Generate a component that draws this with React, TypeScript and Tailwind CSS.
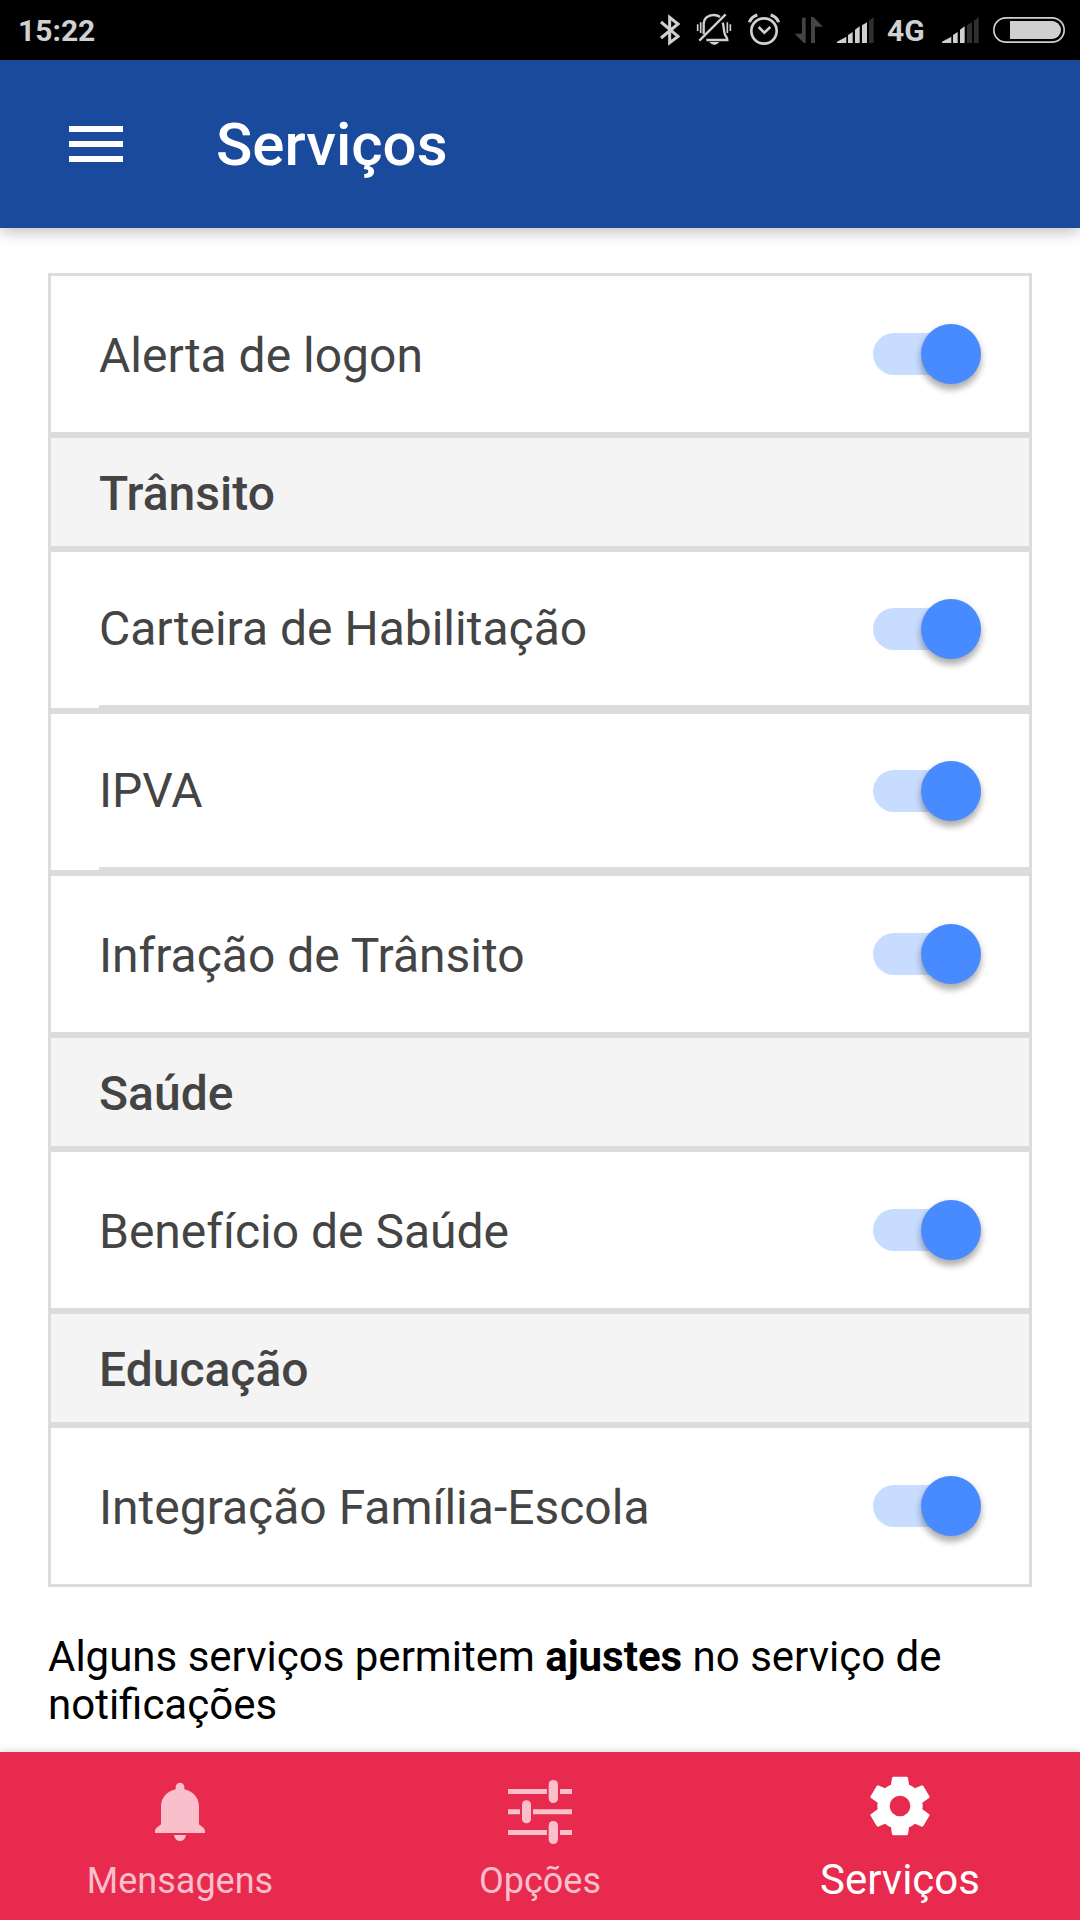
import React, { useState } from 'react';
import clsx from 'clsx';

type Service = { id: string; label: string };
type Group = { title?: string; services: Service[] };

const groups: Group[] = [
  { services: [{ id: 'logon', label: 'Alerta de logon' }] },
  {
    title: 'Trânsito',
    services: [
      { id: 'cnh', label: 'Carteira de Habilitação' },
      { id: 'ipva', label: 'IPVA' },
      { id: 'infracao', label: 'Infração de Trânsito' },
    ],
  },
  { title: 'Saúde', services: [{ id: 'saude', label: 'Benefício de Saúde' }] },
  { title: 'Educação', services: [{ id: 'escola', label: 'Integração Família-Escola' }] },
];

const BluetoothIcon = () => (
  <svg viewBox="51 0 75 180" className="w-[25px] h-[60px]" fill="none" stroke="currentColor" strokeWidth="9">
    <path d="M63 66 L114 109 L89 128 V52 L114 72 L63 114" />
  </svg>
);

const SilentIcon = () => (
  <svg viewBox="162 0 120 180" className="w-10 h-[60px]" fill="none" stroke="currentColor" strokeWidth="7">
    <path d="M191 103 V73 C191 55 204 45 221 45 C229 45 235 47 240 51" />
    <path d="M248 68 C252 78 251 92 254 101 C256 109 262 112 262 120 H199" />
    <path d="M257 43 L178 122" />
    <path d="M173 73 V93 M182 67 V99 M262 67 V99 M271 73 V93" strokeWidth="5" />
    <path d="M208 126 H238 Q223 144 208 126 Z" fill="currentColor" stroke="none" />
  </svg>
);

const AlarmIcon = () => (
  <svg viewBox="318 0 108 180" className="w-9 h-[60px]" fill="none" stroke="currentColor" strokeWidth="8">
    <circle cx="372" cy="93" r="38" />
    <path d="M356 81 L373 98 L391 81" strokeWidth="8" />
    <path d="M328 67 C332 56 341 48 352 45 M416 67 C412 56 403 48 392 45" strokeWidth="9" />
  </svg>
);

const DataIcon = () => (
  <svg viewBox="462 0 90 180" className="w-[30px] h-[60px]" fill="#444444">
    <path d="M497 53 V129 H492 L464 101 H486 V53 Z M513 129 V51 H520 L549 80 H525 V129 Z" />
  </svg>
);

const SignalIcon = ({ level, wide = false }: { level: number; wide?: boolean }) => {
  const bars = [
    'M0 129 V125 L28 110 V129 Z',
    'M33 129 V105 L47 96 V129 Z',
    'M54 129 V89 L68 79 V129 Z',
    'M75 129 V76 L90 67 V129 Z',
    'M96 129 V62 L110 52 V129 Z',
  ];
  return (
    <svg
      viewBox={wide ? '-21 0 138 180' : '-3 0 117 180'}
      className={clsx('h-[60px]', wide ? 'w-[46px]' : 'w-[39px]')}
    >
      {bars.map((d, i) => (
        <path key={d} d={d} fill={i < level ? '#d0d0d0' : '#303030'} />
      ))}
    </svg>
  );
};

const BatteryIcon = () => (
  <svg viewBox="1059 0 216 180" className="w-[72px] h-[60px]">
    <rect x="1061.5" y="53.5" width="211" height="73" rx="36.5" fill="none" stroke="currentColor" strokeWidth="5" />
    <path d="M1110 63 H1236 A27 27 0 0 1 1236 117 H1110 Z" fill="currentColor" />
  </svg>
);

const BellIcon = () => (
  <svg viewBox="264 108 192 210" className="w-16 h-[70px]" fill="currentColor">
    <path d="M347 148 V141 A13 13 0 0 1 373 141 V148 C399 154 417 173 417 200 V253 C423 259 435 264 435 274 V279 H285 V274 C285 264 297 259 303 253 V200 C303 173 321 154 347 148 Z" />
    <path d="M342 285 H378 C376 297 369 303 360 303 C351 303 344 297 342 285 Z" />
  </svg>
);

const OptionsIcon = () => (
  <svg viewBox="204 108 192 210" className="w-16 h-[70px]" fill="currentColor">
    <path d="M204 147 H321 V162 H204 Z M360 147 H396 V162 H360 Z" />
    <path d="M204 208 H240 V223 H204 Z M279 208 H396 V223 H279 Z" />
    <path d="M204 270 H321 V285 H204 Z M360 270 H396 V285 H360 Z" />
    <rect x="326" y="120" width="28" height="69" rx="14" />
    <rect x="246" y="181" width="27" height="69" rx="13" />
    <rect x="326" y="243" width="28" height="69" rx="14" />
  </svg>
);

const GearIcon = () => (
  <svg viewBox="264 108 192 210" className="w-16 h-[70px]" fill="currentColor" fillRule="evenodd">
    <path d="M339 110 H381 L384 113 L387 134 Q397 138 405 145 L426 136 L430 138 L449 170 L448 173 L427 188 Q429 198 427 208 L448 223 L449 226 L430 258 L426 260 L405 251 Q397 258 387 262 L384 283 L381 286 H339 L336 283 L333 262 Q323 258 315 251 L294 260 L290 258 L271 226 L272 223 L293 208 Q291 198 293 188 L272 173 L271 170 L290 138 L294 136 L315 145 Q323 138 333 134 L336 113 Z M360 167 A31 31 0 1 0 360 229 A31 31 0 1 0 360 167 Z" />
  </svg>
);

const tabs = [
  { id: 'mensagens', label: 'Mensagens', Icon: BellIcon },
  { id: 'opcoes', label: 'Opções', Icon: OptionsIcon },
  { id: 'servicos', label: 'Serviços', Icon: GearIcon },
];

const StatusBar = () => (
  <div className="flex h-[60px] items-center justify-between bg-black pl-[18px] pr-[15px] text-[30px] leading-[60px] font-bold text-[#d0d0d0]">
    <span className="pt-0.5">15:22</span>
    <div className="flex items-center gap-3">
      <BluetoothIcon />
      <SilentIcon />
      <AlarmIcon />
      <DataIcon />
      <SignalIcon level={4} />
      <span className="w-9 pt-0.5">4G</span>
      <SignalIcon level={3} wide />
      <BatteryIcon />
    </div>
  </div>
);

const Toggle = ({ id, checked, onChange }: { id: string; checked: boolean; onChange: () => void }) => (
  <input
    id={id}
    type="checkbox"
    role="switch"
    checked={checked}
    onChange={onChange}
    className="flex h-[42px] w-[108px] shrink-0 cursor-pointer appearance-none items-center rounded-full bg-[#dedede] before:h-[60px] before:w-[60px] before:shrink-0 before:rounded-full before:bg-white before:shadow-[0_6px_6px_rgba(0,0,0,0.22),0_3px_9px_rgba(0,0,0,0.16)] before:content-[''] checked:justify-end checked:bg-[#c8dcff] checked:before:bg-[#488aff]"
  />
);

const App: React.FC = () => {
  const [enabled, setEnabled] = useState<Record<string, boolean>>({
    logon: true,
    cnh: true,
    ipva: true,
    infracao: true,
    saude: true,
    escola: true,
  });
  const [activeTab, setActiveTab] = useState('servicos');

  const toggle = (id: string) => setEnabled((prev) => ({ ...prev, [id]: !prev[id] }));

  return (
    <div className="flex min-h-screen flex-col bg-white font-['Roboto',sans-serif]">
      <StatusBar />
      <header className="flex h-[168px] items-center bg-[#1a4a9c] pl-[69px] text-white shadow-[0_3px_15px_rgba(0,0,0,0.28)]">
        <button type="button" aria-label="Menu" className="flex w-[54px] flex-col gap-[9px]">
          <span className="h-1.5 bg-white" />
          <span className="h-1.5 bg-white" />
          <span className="h-1.5 bg-white" />
        </button>
        <h1 className="ml-[93px] pt-0.5 text-[60px] leading-[72px] font-medium">Serviços</h1>
      </header>

      <main className="flex-1 px-12 pt-[45px] pb-5">
        <div className="flex flex-col gap-1.5 border-3 border-[#dcdcdc] bg-[#dcdcdc] text-[48px] leading-[60px] text-[#444444]">
          {groups.map((group, g) => (
            <section key={g} className="flex flex-col gap-1.5">
              {group.title && (
                <h2 className="flex h-[108px] items-center bg-[#f4f4f4] px-12 pt-[3px] font-medium">{group.title}</h2>
              )}
              {group.services.map((service, i) => {
                const last = i === group.services.length - 1;
                return (
                  <div key={service.id} className="flex h-[156px] bg-white pl-12">
                    <div
                      className={clsx(
                        'flex flex-1 items-center justify-between pr-12',
                        !last && 'border-b-3 border-[#dcdcdc]'
                      )}
                    >
                      <label htmlFor={service.id} className={clsx(last && 'pt-[3px]')}>
                        {service.label}
                      </label>
                      <Toggle id={service.id} checked={enabled[service.id]} onChange={() => toggle(service.id)} />
                    </div>
                  </div>
                );
              })}
            </section>
          ))}
        </div>
        <p className="mt-[46px] text-[42px] leading-[48px] text-black">
          Alguns serviços permitem <b>ajustes</b> no serviço de notificações
        </p>
      </main>

      <nav className="sticky bottom-0 grid h-[168px] grid-cols-3 bg-[#e82a4f] shadow-[0_0_9px_rgba(0,0,0,0.18)]">
        {tabs.map(({ id, label, Icon }) => (
          <button
            key={id}
            type="button"
            onClick={() => setActiveTab(id)}
            className={clsx(
              'flex flex-col items-center pt-6',
              activeTab === id
                ? 'text-[42px] leading-[46px] text-white'
                : 'text-[36px] leading-[48px] text-[#f9bfcb]'
            )}
          >
            <Icon />
            <span className="mt-[11px]">{label}</span>
          </button>
        ))}
      </nav>
    </div>
  );
};

export default App;
